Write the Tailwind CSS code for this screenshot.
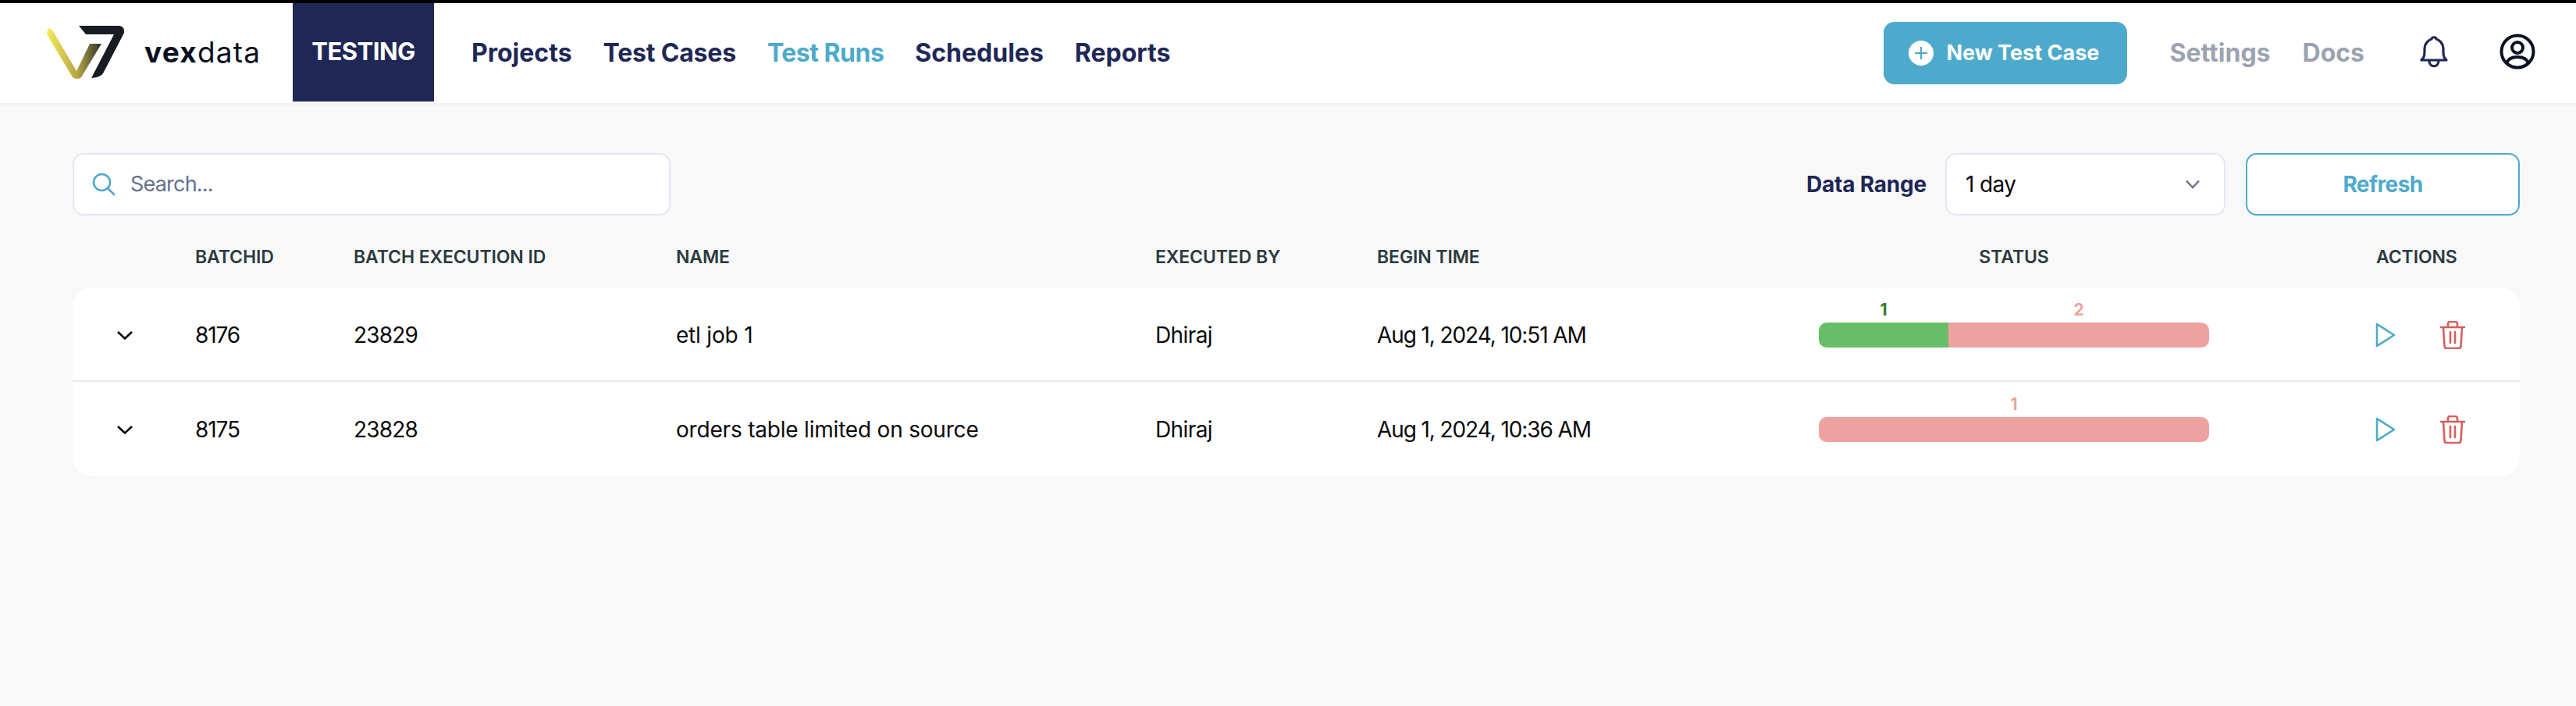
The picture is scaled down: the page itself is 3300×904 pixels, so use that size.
<!DOCTYPE html>
<html lang="en">
<head>
<meta charset="utf-8">
<title>vexdata</title>
<script src="https://cdn.jsdelivr.net/npm/@tailwindcss/browser@4"></script>
</head>
<body class="w-[3300px] h-[904px] overflow-hidden bg-[#f8f8f8] font-['Inter',sans-serif] border-t-4 border-black">
<header class="h-[130px] bg-white border-b-2 border-[#f1f1f1] flex items-start">
  <div class="w-[375px] h-[126px] flex items-center pl-[60px] shrink-0">
    <svg class="w-[100px] h-[70px] shrink-0" viewBox="0 0 100 70" fill="none">
      <defs><linearGradient id="g" x1="0" x2="72" y1="0" y2="0" gradientUnits="userSpaceOnUse"><stop offset="0" stop-color="#f7ea5a"/><stop offset=".55" stop-color="#b5a545"/><stop offset="1" stop-color="#23262b"/></linearGradient></defs>
      <path d="M4 4 L9 10 L38 59 L55 24 L70 24 L44 67 Q39 71 33 67 L0 12 Q0 6 4 4Z" fill="url(#g)"/>
      <path d="M41 1 H93 Q100 2 99 10 L72 62 Q69 67 57 68 L86 12 H50 Z" fill="#171b22"/>
    </svg>
    <div class="ml-[25px] text-[37px] leading-none text-[#0b1020] tracking-[1.2px] -mt-[2px]"><span class="font-bold">vex</span><span class="font-normal">data</span></div>
  </div>
  <div class="w-[181px] h-[126px] bg-[#1f2756] text-white text-[31px] font-bold flex items-center justify-center tracking-[-0.5px] pb-[2px] shrink-0">TESTING</div>
  <nav class="h-[126px] flex items-center gap-[40px] ml-[48px] text-[32px] font-bold text-[#1f2756] pt-[2px]">
    <span>Projects</span><span class="tracking-[-0.2px]">Test Cases</span><span class="text-[#4eaacc] tracking-[-0.5px]">Test Runs</span><span>Schedules</span><span>Reports</span>
  </nav>
  <div class="ml-auto h-[126px] flex items-center pr-[52px]">
    <button class="w-[312px] h-[80px] rounded-[14px] bg-[#4eaacc] flex items-center pl-[32px] text-white text-[27px] font-bold mt-[2px]">
      <svg class="w-[32px] h-[32px] mr-[16px]" viewBox="0 0 32 32"><circle cx="16" cy="16" r="16" fill="#fff"/><path d="M16 8v16M8 16h16" stroke="#4eaacc" stroke-width="2"/></svg>
      New Test Case
    </button>
    <span class="ml-[54px] text-[32px] font-bold text-[#9ca3af] pt-[2px]">Settings</span>
    <span class="ml-[41px] text-[32px] font-bold text-[#9ca3af] pt-[2px]">Docs</span>
    <svg class="ml-[71px] w-[36px] h-[42px] mb-[2px]" viewBox="0 0 36 42" fill="none" stroke="#1f2756" stroke-width="3.2" stroke-linejoin="round" stroke-linecap="round"><path d="M2 32h32c-3-3-4-5-4-11v-4c0-6-5-11-9-12 0-3-6-3-6 0-4 1-9 6-9 12v4c0 6-1 8-4 11Z"/><path d="M12 33c0 9 12 9 12 0"/></svg>
    <svg class="ml-[66px] w-[46px] h-[46px] mb-[2px]" viewBox="0 0 46 46" fill="none" stroke="#0b1020" stroke-width="4"><circle cx="23" cy="23" r="20.5"/><circle cx="23" cy="18" r="7"/><path d="M9 38c2-6 8-8 14-8s12 2 14 8"/></svg>
  </div>
</header>
<main class="pl-[93px] pr-[72px] pt-[62px]">
  <div class="flex items-center h-[80px]">
    <div class="w-[766px] h-[80px] bg-white border-2 border-[#e2e8f0] rounded-[14px] flex items-center pl-[23px]">
      <svg class="w-[30px] h-[30px] shrink-0" viewBox="0 0 30 30" fill="none" stroke="#4eaacc" stroke-width="2.6" stroke-linecap="round"><circle cx="12.500" cy="12.500" r="10.500"/><path d="M20 20l8 8"/></svg>
      <span class="ml-[19px] text-[27px] text-[#64708a] tracking-[-0.8px]">Search...</span>
    </div>
    <span class="ml-auto text-[28px] font-bold text-[#1f2756] tracking-[-0.2px]">Data Range</span>
    <div class="ml-[24px] w-[359px] h-[80px] bg-white border-2 border-[#e2e8f0] rounded-[14px] flex items-center justify-between pl-[24px] pr-[30px] text-[28px] text-[#0a0a0a] tracking-[-0.6px]">
      <span>1 day</span>
      <svg class="w-[20px] h-[12px]" viewBox="0 0 20 12" fill="none" stroke="#6b7280" stroke-width="2.400"><path d="M2 1.500l8 8.500 8-8.500"/></svg>
    </div>
    <button class="ml-[26px] w-[351px] h-[80px] bg-white border-2 border-[#4eaacc] rounded-[14px] text-[28px] font-bold text-[#4eaacc] tracking-[-0.6px]">Refresh</button>
  </div>
  <div class="h-[93px] pt-[13px] grid grid-cols-[157px_203px_413px_614px_284px_566px_500px_1fr] items-center text-[23px] font-semibold text-[#2c3a3f] tracking-[-0.1px]">
    <span></span><span>BATCHID</span><span>BATCH EXECUTION ID</span><span>NAME</span><span>EXECUTED BY</span><span>BEGIN TIME</span><span class="text-center">STATUS</span><span class="pl-[214px]">ACTIONS</span>
  </div>
  <div class="bg-white rounded-[24px] text-[28px] text-[#0a0a0a]">
    <div class="h-[120px] pt-[2px] border-b-2 border-[#e2e8f0] grid grid-cols-[157px_203px_413px_614px_284px_566px_500px_1fr] items-center">
      <span class="pl-[57px]"><svg class="w-[20px] h-[11px]" viewBox="0 0 20 11" fill="none" stroke="#0a0a0a" stroke-width="2.600"><path d="M1 1l9 8.500L19 1"/></svg></span>
      <span class="tracking-[-1.1px]">8176</span><span class="tracking-[-0.8px]">23829</span><span class="tracking-[-0.2px]">etl job 1</span><span class="tracking-[-0.6px]">Dhiraj</span><span class="tracking-[-1.1px]">Aug 1, 2024, 10:51 AM</span>
      <div class="self-start pt-[12px] flex w-[500px] text-[21px] font-bold leading-[28px] text-center">
        <div class="w-[166px]"><div class="text-[#2f7d1e] mb-[2px]">1</div><div class="h-[32px] bg-[#68be66] rounded-l-[10px]"></div></div>
        <div class="w-[334px]"><div class="text-[#eea2a0] mb-[2px]">2</div><div class="h-[32px] bg-[#eea2a0] rounded-r-[10px]"></div></div>
      </div>
      <div class="pl-[213px] flex items-center">
        <svg class="w-[26px] h-[32px]" viewBox="0 0 26 32" fill="none" stroke="#4eaacc" stroke-width="2.600" stroke-linejoin="round"><path d="M2 2l22 14L2 30Z"/></svg>
        <svg class="ml-[57px] w-[32px] h-[36px]" viewBox="0 0 32 36" fill="none" stroke="#d65f5f" stroke-width="2.600" stroke-linecap="round"><path d="M1 8h30M10 8V4q0-3 3-3h6q3 0 3 3v4M4 8l1.500 24q0 3 3 3h15q3 0 3-3L28 8M13 14v14M19 14v14"/></svg>
      </div>
    </div>
    <div class="h-[120px] pt-[2px] grid grid-cols-[157px_203px_413px_614px_284px_566px_500px_1fr] items-center">
      <span class="pl-[57px]"><svg class="w-[20px] h-[11px]" viewBox="0 0 20 11" fill="none" stroke="#0a0a0a" stroke-width="2.600"><path d="M1 1l9 8.500L19 1"/></svg></span>
      <span class="tracking-[-1.1px]">8175</span><span class="tracking-[-0.8px]">23828</span><span class="tracking-[-0.2px]">orders table limited on source</span><span class="tracking-[-0.6px]">Dhiraj</span><span class="tracking-[-1.1px]">Aug 1, 2024, 10:36 AM</span>
      <div class="self-start pt-[13px] w-[500px] text-[21px] font-bold leading-[28px] text-center">
        <div class="text-[#eea2a0] mb-[2px]">1</div><div class="h-[32px] bg-[#eea2a0] rounded-[10px]"></div>
      </div>
      <div class="pl-[213px] flex items-center">
        <svg class="w-[26px] h-[32px]" viewBox="0 0 26 32" fill="none" stroke="#4eaacc" stroke-width="2.600" stroke-linejoin="round"><path d="M2 2l22 14L2 30Z"/></svg>
        <svg class="ml-[57px] w-[32px] h-[36px]" viewBox="0 0 32 36" fill="none" stroke="#d65f5f" stroke-width="2.600" stroke-linecap="round"><path d="M1 8h30M10 8V4q0-3 3-3h6q3 0 3 3v4M4 8l1.500 24q0 3 3 3h15q3 0 3-3L28 8M13 14v14M19 14v14"/></svg>
      </div>
    </div>
  </div>
</main>
</body>
</html>
